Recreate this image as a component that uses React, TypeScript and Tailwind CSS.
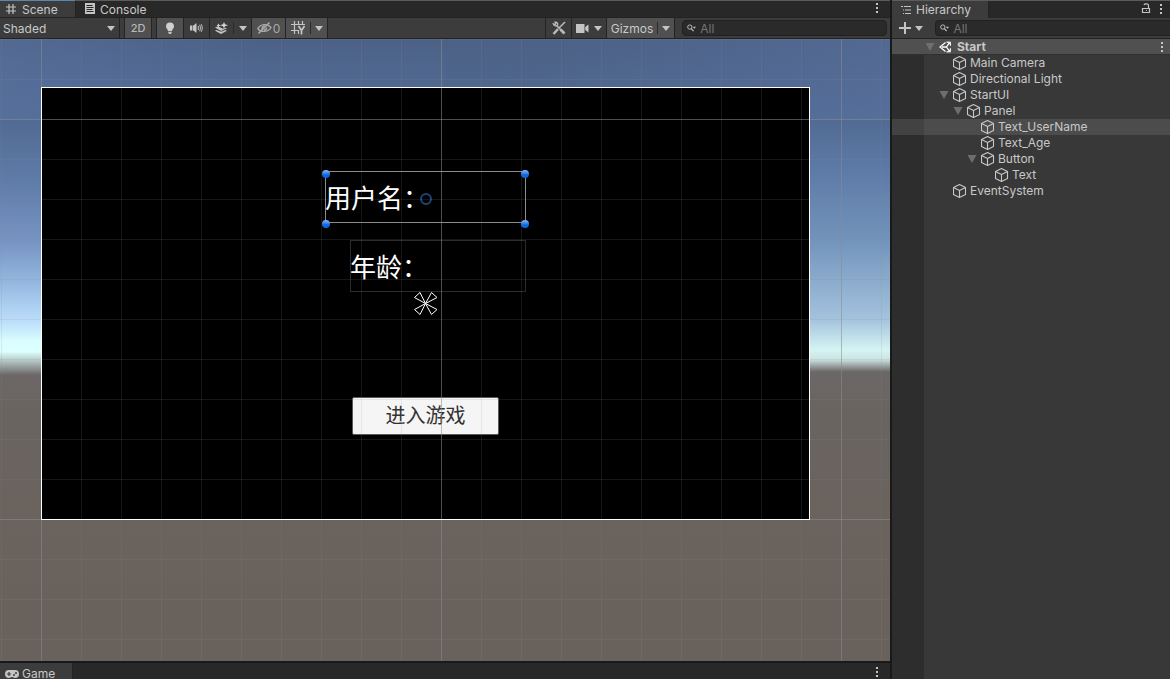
import type { ReactNode } from "react";
import clsx from "clsx";

type TreeNode = {
  name: string;
  depth: number;
  open?: boolean;
  selected?: boolean;
};

const nodes: TreeNode[] = [
  { name: "Main Camera", depth: 1 },
  { name: "Directional Light", depth: 1 },
  { name: "StartUI", depth: 1, open: true },
  { name: "Panel", depth: 2, open: true },
  { name: "Text_UserName", depth: 3, selected: true },
  { name: "Text_Age", depth: 3 },
  { name: "Button", depth: 3, open: true },
  { name: "Text", depth: 4 },
  { name: "EventSystem", depth: 1 },
];

const indents = ["pl-[33px]", "pl-[47px]", "pl-[61px]", "pl-[75px]", "pl-[89px]"];

function Caret() {
  return (
    <svg width="8" height="5" viewBox="0 0 8 5" className="shrink-0" aria-hidden="true">
      <path d="M0 0h8L4 5z" fill="#c4c4c4" />
    </svg>
  );
}

function Fold() {
  return (
    <svg width="10" height="8" viewBox="0 0 10 8" aria-hidden="true">
      <path d="M.5 0h9L5 8z" fill="#6e6e6e" />
    </svg>
  );
}

function Dots() {
  return (
    <svg width="4" height="12" viewBox="0 0 4 12" aria-hidden="true">
      <path d="M1 1h2v2H1zM1 5h2v2H1zM1 9h2v2H1z" fill="#c4c4c4" />
    </svg>
  );
}

function HashIcon() {
  return (
    <svg width="12" height="12" viewBox="0 0 12 12" aria-hidden="true">
      <path d="M4 1v10M8 1v10M1 4h10M1 8h10" stroke="#c4c4c4" strokeWidth="1.2" />
    </svg>
  );
}

function ConsoleIcon() {
  return (
    <svg width="12" height="12" viewBox="0 0 12 12" aria-hidden="true">
      <path d="M1 0h10v11H1z" fill="#c4c4c4" />
      <path d="M2.5 2.5h6M2.5 4.5h7M2.5 6.5h6M2.5 8.5h7" stroke="#282828" />
    </svg>
  );
}

function HierarchyIcon() {
  return (
    <svg width="12" height="10" viewBox="0 0 12 10" aria-hidden="true">
      <path d="M1 1.500h2M4 1.500h7M3 5h1M5 5h6M3 8.500h1M5 8.500h6" stroke="#c4c4c4" strokeWidth="1.2" />
    </svg>
  );
}

function GamepadIcon() {
  return (
    <svg width="14" height="8" viewBox="0 0 14 8" aria-hidden="true">
      <path d="M4 0h6a4 4 0 0 1 0 8C8.600 8 8.300 7 7 7S5.400 8 4 8a4 4 0 0 1 0-8z" fill="#c4c4c4" />
      <path d="M2 4h4M4 2v4" stroke="#3c3c3c" strokeWidth="1.2" />
      <circle cx="9" cy="5" r="1" fill="#3c3c3c" />
      <circle cx="11" cy="3" r="1" fill="#3c3c3c" />
    </svg>
  );
}

function BulbIcon() {
  return (
    <svg width="10" height="13" viewBox="0 0 10 13" aria-hidden="true">
      <path d="M5 .5a4 4 0 0 1 4 4C9 6.300 7.200 7 7 9H3C2.800 7 1 6.300 1 4.500a4 4 0 0 1 4-4z" fill="#d0d0d0" />
      <path d="M3.300 9.800h3.400v1.200L5.800 12H4.200l-.9-1z" fill="#c4c4c4" />
    </svg>
  );
}

function SpeakerIcon() {
  return (
    <svg width="13" height="10" viewBox="0 0 13 10" aria-hidden="true">
      <path d="M0 2.500h2v5H0zM2.600 2.500h.8L6.500 0v10L3.400 7.500h-.8z" fill="#c4c4c4" />
      <path d="M8.300 3v4M9.600 1.800c1.100 2.200 1.100 4.200 0 6.400M11.200 1.200c1.400 2.600 1.400 5 0 7.600" fill="none" stroke="#c4c4c4" />
    </svg>
  );
}

function EffectsIcon() {
  return (
    <svg width="13" height="12" viewBox="0 0 13 12" aria-hidden="true">
      <path d="M0 8.800l1.500-.8 4.500 1.800L10.500 8l1.500.8L6 12z" fill="#c4c4c4" />
      <path d="M0 5.500L3 4.200l3 1.600 2 .9 3-.9 1 .5L6 9z" fill="#c4c4c4" />
      <path d="M9 0l1 2.300 3 .9-3 1L9 6.500 8 4.200l-3-1 3-.9zM3.500 1.500l.7 1.300 1.300.6-1.300.7-.7 1.200-.7-1.200-1.300-.7 1.300-.6z" fill="#d4d4d4" />
    </svg>
  );
}

function HiddenIcon() {
  return (
    <svg width="15" height="12" viewBox="0 0 15 12" fill="none" stroke="#a8a8a8" strokeWidth="1.300" aria-hidden="true">
      <path d="M.8 6.500C3.500 2 10.500 1 14 5.500 11.500 10 4 11 .8 6.500z" />
      <path d="M12.500.5l-11 11" strokeWidth="1.500" />
      <path d="M5.500 7.500C4.500 5.500 6 3.800 8 4M9.500 5.500c.3 1.500-.8 2.700-2.500 2.700" strokeWidth="1.700" />
    </svg>
  );
}

function GridSnapIcon() {
  return (
    <svg width="15" height="14" viewBox="0 0 15 14" fill="none" stroke="#c4c4c4" strokeWidth="1.200" aria-hidden="true">
      <path d="M3.500 0v13M7.500 0v4M7.500 9v4M11.500 0v4M0 3.500h14M0 9.500h8" />
      <path d="M7.500 5l3 4.500L13.500 5M10.500 9v4.500" strokeWidth="1.700" />
    </svg>
  );
}

function ToolsIcon() {
  return (
    <svg width="14" height="14" viewBox="0 0 14 14" fill="none" stroke="#b8b8b8" aria-hidden="true">
      <path d="M13 1L7 7" strokeWidth="1.600" />
      <path d="M6 8l-4.500 5" strokeWidth="2.600" />
      <path d="M4.500 4.500l5 5" strokeWidth="1.600" />
      <path d="M8.500 8.500l4 4" strokeWidth="2.800" />
      <path d="M3 1.200c2.300-.6 3.300 1.600 2.500 3.300-1.700 1-3.900.2-4.300-1.800l2 .8.800-.8z" strokeWidth="1.300" />
    </svg>
  );
}

function CameraIcon() {
  return (
    <svg width="13" height="9" viewBox="0 0 13 9" aria-hidden="true">
      <path d="M0 0h8.500v9H0zM9.200 3L12.500.5v8L9.200 6z" fill="#c4c4c4" />
    </svg>
  );
}

function SearchIcon() {
  return (
    <svg width="10" height="8" viewBox="0 0 10 8" aria-hidden="true">
      <circle cx="3" cy="3" r="2.300" fill="none" stroke="#c4c4c4" />
      <path d="M4.700 4.700l2.300 2.600" stroke="#c4c4c4" strokeWidth="1.200" />
      <path d="M6.200 2.700h3.400L7.900 4.700z" fill="#c4c4c4" />
    </svg>
  );
}

function LockIcon() {
  return (
    <svg width="10" height="11" viewBox="0 0 10 11" fill="none" stroke="#c4c4c4" strokeWidth="1.200" aria-hidden="true">
      <path d="M1.500 5.500h7v4h-7zM7.500 5V2.500c0-2-4-2-4.500-.5M5 7.500h1" />
    </svg>
  );
}

function CubeIcon() {
  return (
    <svg width="14" height="14" viewBox="0 0 14 14" fill="none" stroke="#c8c8c8" strokeWidth="1.100" strokeLinejoin="round" aria-hidden="true">
      <path d="M6.500.6l6 3v6.800l-6 3-6-3V3.600zM.5 3.600l6 3 6-3M6.500 6.600v6.800" />
    </svg>
  );
}

function UnityIcon() {
  return (
    <svg width="13" height="12" viewBox="0 0 13 12" fill="none" stroke="#ffffff" strokeWidth="1.300" aria-hidden="true">
      <path d="M6.500 1.500L.9 6l5.600 4.500M7.500 1.100l3.600.2.400 3.400M7.500 10.900l3.600-.2.400-3.400M3 6h4.500M7.500 6l2.800-4.200M7.500 6l2.800 4.200" />
    </svg>
  );
}

function GizmoStar() {
  return (
    <svg width="24" height="24" viewBox="0 0 24 24" fill="none" stroke="#ffffff" aria-hidden="true">
      <path d="M11.500 11.500L.5 5.500l5.500-5zM11.500 11.500l6-11 5.500 5zM11.500 11.500l11.500 6-5.500 5zM11.500 11.500L6 22.500.5 17.500z" />
    </svg>
  );
}

type ToolButtonProps = {
  label: string;
  on?: boolean;
  className?: string;
  children: ReactNode;
};

function ToolButton({ label, on, className, children }: ToolButtonProps) {
  return (
    <button
      type="button"
      aria-label={label}
      className={clsx(
        "flex h-full shrink-0 items-center justify-center border-r border-[#232323]",
        on ? "bg-[#505050]" : "bg-[#3c3c3c]",
        className,
      )}
    >
      {children}
    </button>
  );
}

function Split() {
  return <span className="h-3 w-px bg-[#2a2a2a]" />;
}

function Search({ label, className }: { label: string; className?: string }) {
  return (
    <label className={clsx("flex h-4 items-center gap-1 rounded border border-[#212121] bg-[#2a2a2a] pl-1", className)}>
      <SearchIcon />
      <input
        type="text"
        aria-label={label}
        placeholder="All"
        className="w-full min-w-0 bg-transparent text-[12px] leading-3 outline-none placeholder:text-[#757575]"
      />
    </label>
  );
}

function MenuButton({ label }: { label: string }) {
  return (
    <button type="button" aria-label={label} className="flex items-center">
      <Dots />
    </button>
  );
}

function SceneView() {
  const handle = "absolute size-2 rounded-full bg-linear-to-b from-[#8db9f3] to-[#0868e0] to-60%";
  return (
    <main className="relative flex-1 overflow-hidden bg-[linear-gradient(to_bottom,#4c6185_0%,#516a93_13%,#5b78a4_20%,#7192ba_32%,#a3c2dd_45%,#d5f4f3_50%,#cbe4e3_51.5%,#6c6767_53.5%,#6a6460_60%,#69615b_100%)] font-['Noto_Sans_CJK_SC',sans-serif] text-white">
      {/* brighter horizon on the sun side */}
      <div className="absolute top-0 left-0 h-[54%] w-1/2 bg-[linear-gradient(to_bottom,#4c618500_0%,#516a93_24%,#5f7ba8_42%,#7693c2_60%,#93b6df_72%,#bcdefb_84%,#dafefe_90%,#dcffff_93%,#c0d8d6_95%,#6c6767_100%)]" />
      <div className="absolute inset-x-0 top-0 h-[13%] bg-[linear-gradient(to_right,#5f79ad50_0%,transparent_30%,transparent_60%,#5f79ad50_100%)]" />
      <div className="absolute top-12 left-[41px] h-[433px] w-[769px] border border-white bg-black">
        <div className="absolute top-[83px] left-[283px] h-[52px] w-[201px] border border-[#8c8c8c]">
          <p className="-ml-px flex h-full items-center pb-0.5 text-[26px] whitespace-nowrap">用户名：</p>
          <span className={clsx(handle, "-top-0.5 -left-1")} />
          <span className={clsx(handle, "-top-0.5 -right-1")} />
          <span className={clsx(handle, "-bottom-1.5 -left-1")} />
          <span className={clsx(handle, "-right-1 -bottom-1.5")} />
          <span className="absolute top-[21px] left-[94px] size-3 rounded-full border-2 border-[#1d4377]" />
        </div>
        <div className="absolute top-[152px] left-[308px] h-[52px] w-[176px] border border-[#2c2c2c]">
          <p className="-ml-px flex h-full items-center pb-0.5 text-[26px] whitespace-nowrap">年龄：</p>
        </div>
        <div className="absolute top-[204px] left-[372px]">
          <GizmoStar />
        </div>
        <button
          type="button"
          className="absolute top-[309px] left-[310px] flex h-[38px] w-[147px] items-center justify-center rounded-xs border border-[#5a5a5a] bg-[#f5f5f5] pb-0.5 text-[20px] text-[#323232]"
        >
          进入游戏
        </button>
      </div>
      <div className="pointer-events-none absolute inset-0 bg-[linear-gradient(to_right,#8c8c8c28_1px,transparent_1px),linear-gradient(to_bottom,#8c8c8c28_1px,transparent_1px)] bg-size-[40px_40px] bg-position-[1px_0px]" />
      <div className="pointer-events-none absolute inset-0 bg-[linear-gradient(to_right,#8c8c8c77_1px,transparent_1px),linear-gradient(to_bottom,#8c8c8c77_1px,transparent_1px)] bg-size-[400px_400px] bg-position-[41px_80px]" />
      <div className="pointer-events-none absolute top-12 left-[41px] h-[433px] w-[769px] border border-white" />
    </main>
  );
}

function SceneToolbar() {
  return (
    <div className="flex h-[21px] border-b border-[#232323] bg-[#3c3c3c] text-[12px]">
      <div className="relative w-[120px] shrink-0 border-r border-[#232323]">
        <select aria-label="Draw mode" className="h-full w-full appearance-none bg-transparent pt-0.5 pl-[3px] outline-none">
          <option>Shaded</option>
        </select>
        <span className="pointer-events-none absolute inset-y-0 right-1 flex items-center">
          <Caret />
        </span>
      </div>
      <ToolButton label="2D" on className="ml-1 w-7 border-l text-[11px] font-medium text-[#b8b8b8]">
        2D
      </ToolButton>
      <ToolButton label="Scene lighting" on className="ml-1 w-7 border-l">
        <BulbIcon />
      </ToolButton>
      <ToolButton label="Scene audio" className="w-[26px]">
        <SpeakerIcon />
      </ToolButton>
      <ToolButton label="Effects" className="w-[42px] gap-[5px]">
        <EffectsIcon />
        <Split />
        <Caret />
      </ToolButton>
      <ToolButton label="Hidden objects" on className="w-[34px] gap-px text-[#a8a8a8]">
        <HiddenIcon />
        <span className="pt-0.5">0</span>
      </ToolButton>
      <ToolButton label="Grid" on className="w-[42px] gap-1">
        <GridSnapIcon />
        <Split />
        <Caret />
      </ToolButton>
      <div className="flex-1" />
      <ToolButton label="Component tools" className="w-[27px] border-l">
        <ToolsIcon />
      </ToolButton>
      <ToolButton label="Scene camera" className="w-[35px] gap-[5px]">
        <CameraIcon />
        <Caret />
      </ToolButton>
      <ToolButton label="Gizmos" on className="w-[68px] gap-1">
        <span className="pt-0.5">Gizmos</span>
        <Split />
        <Caret />
      </ToolButton>
      <Search label="Search scene" className="mt-0.5 mr-[3px] ml-[7px] w-[205px]" />
    </div>
  );
}

function Hierarchy() {
  return (
    <aside className="flex w-[278px] shrink-0 flex-col bg-[#383838]">
      <header className="flex h-[18px] items-center border-t border-[#5c5c5c] bg-[#282828]">
        <h2 className="flex h-full w-[97px] items-center gap-1 border-r border-[#232323] bg-[#3c3c3c] pl-2 text-[12px]">
          <HierarchyIcon />
          <span>Hierarchy</span>
        </h2>
        <div className="ml-auto flex items-center gap-2 pr-[7px] pb-0.5">
          <button type="button" aria-label="Lock">
            <LockIcon />
          </button>
          <MenuButton label="Hierarchy menu" />
        </div>
      </header>
      <div className="flex h-[21px] items-center border-b border-[#232323] bg-[#3c3c3c] pl-[7px]">
        <button type="button" aria-label="Create" className="flex items-center gap-1">
          <svg width="12" height="12" viewBox="0 0 12 12" aria-hidden="true">
            <path d="M6 0v12M0 6h12" stroke="#c4c4c4" strokeWidth="2" />
          </svg>
          <Caret />
        </button>
        <Search label="Search hierarchy" className="ml-3 flex-1 rounded-r-none border-r-0" />
      </div>
      <ul className="flex-1 bg-linear-to-r from-[#2d2d2d] from-[32px] to-[#383838] to-[32px] text-[12px] leading-4">
        <li className="flex h-4 items-center border-b border-[#303030] bg-[#505050] pl-[33px] font-bold">
          <span className="flex w-3.5">
            <Fold />
          </span>
          <UnityIcon />
          <span className="ml-[5px]">Start</span>
          <span className="mr-1.5 ml-auto flex">
            <MenuButton label="Scene menu" />
          </span>
        </li>
        {nodes.map((node) => (
          <li key={node.name} className={clsx("flex h-4 items-center", indents[node.depth], node.selected && "bg-white/10")}>
            <span className="flex w-3.5">{node.open && <Fold />}</span>
            <CubeIcon />
            <span className="ml-[3px]">{node.name}</span>
          </li>
        ))}
      </ul>
    </aside>
  );
}

function App() {
  return (
    <div className="flex min-h-screen bg-[#191919] font-[Inter,'Liberation_Sans',sans-serif] text-[#c8c8c8]">
      <div className="mr-0.5 flex min-w-0 flex-1 flex-col">
        <nav className="flex h-[18px] items-center border-b border-[#232323] bg-[#282828] text-[12px]">
          <button type="button" className="flex h-full w-[76px] items-center gap-[5px] border-t border-r border-t-[#5b87ad] border-r-[#232323] bg-[#3c3c3c] pl-[5px]">
            <HashIcon />
            <span className="pt-0.5">Scene</span>
          </button>
          <button type="button" className="flex h-full flex-1 items-center gap-1 border-t border-[#5c5c5c] pl-2">
            <ConsoleIcon />
            <span className="pt-0.5">Console</span>
          </button>
          <div className="flex h-full items-center border-t border-[#5c5c5c] pr-[11px] pb-0.5">
            <MenuButton label="Scene tab menu" />
          </div>
        </nav>
        <SceneToolbar />
        <SceneView />
        <footer className="mt-0.5 flex h-4 items-center bg-[#282828] text-[12px]">
          <button type="button" className="flex h-full w-[73px] items-center gap-[3px] border-r border-[#232323] bg-[#3c3c3c] pt-1.5 pl-[5px]">
            <GamepadIcon />
            Game
          </button>
          <div className="mr-[11px] ml-auto flex pt-0.5">
            <MenuButton label="Game tab menu" />
          </div>
        </footer>
      </div>
      <Hierarchy />
    </div>
  );
}

export default App;
